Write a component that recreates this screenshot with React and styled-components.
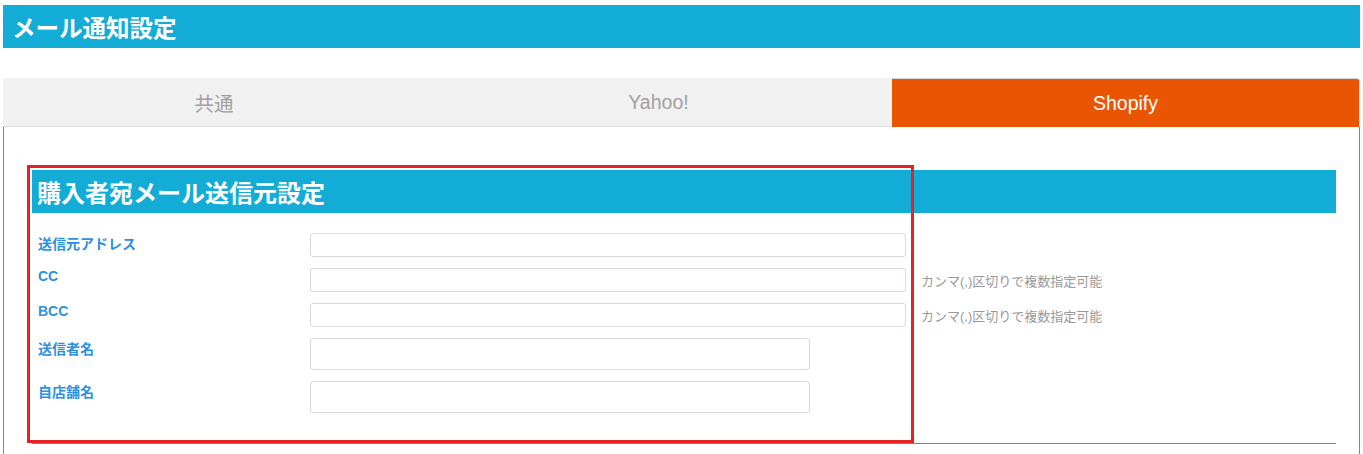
import React from "react";
import styled, { createGlobalStyle } from "styled-components";

const Global = createGlobalStyle`
  html, body { margin: 0; padding: 0; background: #fff; }
  body { font-family: "Liberation Sans", "Noto Sans CJK JP", sans-serif; }
  * { box-sizing: border-box; }
`;

const Page = styled.div`
  padding: 5px 3px 0 3px;
`;

const PageHeader = styled.h1`
  margin: 0;
  height: 43px;
  background: #12acd6;
  color: #fff;
  font-size: 23.5px;
  font-weight: bold;
  display: flex;
  align-items: center;
  padding-left: 9px;
`;

const Tabs = styled.div`
  margin-top: 30px;
  display: flex;
  height: 49px;
`;

const Tab = styled.div`
  width: ${(p) => p.$w}px;
  flex: none;
  display: flex;
  align-items: center;
  justify-content: center;
  font-size: 19.5px;
  background: ${(p) => (p.$active ? "#ea5504" : "#f1f1f1")};
  color: ${(p) => (p.$active ? "#fff" : "#a0a0a0")};
  border-bottom: ${(p) => (p.$active ? "none" : "1px solid #dcdcdc")};
  border-top: 1px solid ${(p) => (p.$active ? "#d8d8d8" : "#f1f1f1")};
  border-right: ${(p) => (p.$active ? "1px solid #d8d8d8" : "none")};
  border-top-right-radius: ${(p) => (p.$active ? "3px" : "0")};
`;

const Panel = styled.div`
  border-left: 1px solid #12acd6;
  border-right: 1px solid #12acd6;
  padding: 43px 23px 10px 28px;
`;

const Section = styled.section`
  position: relative;
  border-bottom: 1px solid #3a96dc;
`;

const SectionHeader = styled.h2`
  margin: 0;
  height: 43px;
  background: #12acd6;
  color: #fff;
  font-size: 24px;
  font-weight: bold;
  display: flex;
  align-items: center;
  padding-left: 5px;
`;

const Form = styled.div`
  padding: 20px 0 30px 6px;
  display: flex;
  flex-direction: column;
  gap: 11px;
`;

const Row = styled.div`
  display: flex;
  align-items: center;
`;

const Label = styled.label`
  width: 272px;
  flex: none;
  align-self: flex-start;
  padding-top: 0;
  color: #2e90e0;
  font-size: 14px;
  font-weight: bold;
`;

const Input = styled.input`
  width: ${(p) => p.$w}px;
  height: ${(p) => p.$h}px;
  border: 1px solid #d9d9d9;
  border-radius: 3px;
  background: #fff;
  padding: 0 6px;
  font-size: 13px;
  outline: none;
`;

const Note = styled.span`
  margin-left: 15px;
  font-size: 13px;
  color: #9a9a9a;
`;

const Highlight = styled.div`
  position: absolute;
  left: -5px;
  top: -5px;
  width: 887px;
  height: 278px;
  border: 3px solid #e42327;
  pointer-events: none;
`;

const fields = [
  { label: "送信元アドレス", w: 596, h: 24 },
  { label: "CC", w: 596, h: 24, note: "カンマ(,)区切りで複数指定可能" },
  { label: "BCC", w: 596, h: 24, note: "カンマ(,)区切りで複数指定可能" },
  { label: "送信者名", w: 500, h: 32 },
  { label: "自店舗名", w: 500, h: 32 },
];

export default function App() {
  return (
    <>
      <Global />
      <Page>
        <PageHeader>メール通知設定</PageHeader>
        <Tabs>
          <Tab $w={422}>共通</Tab>
          <Tab $w={467}>Yahoo!</Tab>
          <Tab $w={468} $active>Shopify</Tab>
        </Tabs>
        <Panel>
          <Section>
            <SectionHeader>購入者宛メール送信元設定</SectionHeader>
            <Form>
              {fields.map((f) => (
                <Row key={f.label}>
                  <Label>{f.label}</Label>
                  <Input type="text" $w={f.w} $h={f.h} />
                  {f.note && <Note>{f.note}</Note>}
                </Row>
              ))}
            </Form>
            <Highlight />
          </Section>
        </Panel>
      </Page>
    </>
  );
}
